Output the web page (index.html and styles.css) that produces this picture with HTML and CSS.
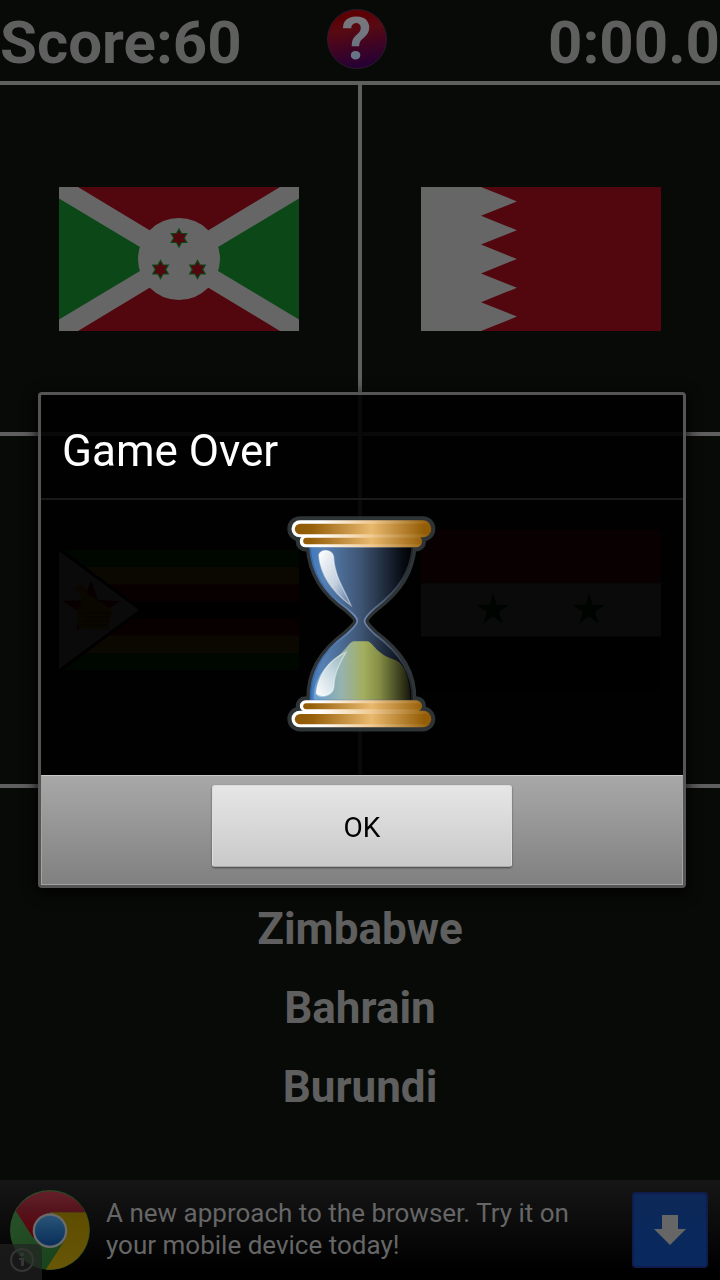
FILE: index.html
```html
<!DOCTYPE html>
<html lang="en">
<head>
<meta charset="utf-8">
<meta name="viewport" content="width=device-width, initial-scale=1">
<title>Flag Game</title>
<link rel="stylesheet" href="styles.css">
</head>
<body>
<div class="game">
  <header class="bar">
    <span class="score">Score:60</span>
    <button class="help" type="button" aria-label="Help"><span class="help-mark">?</span></button>
    <span class="timer">0:00.0</span>
  </header>

  <main class="board">
    <div class="cell">
      <svg class="flag" viewBox="0 0 240 144" role="img" aria-label="Flag of Burundi">
        <defs><path id="star6" d="M0-9 2.6-4.5H7.8L5.2 0 7.8 4.5H2.6L0 9-2.6 4.5H-7.8L-5.2 0-7.8-4.5H-2.6Z"/></defs>
        <path fill="#666" d="M0 0H240V144H0Z"/>
        <path fill="#52070e" d="M19 0H221L120 61ZM19 144H221L120 83Z"/>
        <path fill="#0c4717" d="M0 11.500 101 72 0 132.500ZM240 11.500 139 72 240 132.500Z"/>
        <circle cx="120" cy="72" r="41" fill="#666"/>
        <g fill="#52070e" stroke="#0c4717" stroke-width="1.200">
          <use href="#star6" x="120" y="51"/><use href="#star6" x="101.500" y="82.500"/><use href="#star6" x="138.500" y="82.500"/>
        </g>
      </svg>
    </div>
    <div class="cell">
      <svg class="flag" viewBox="0 0 240 144" role="img" aria-label="Flag of Bahrain">
        <path fill="#52070e" d="M0 0H240V144H0Z"/>
        <path fill="#666" d="M0 0H60L96 14.400 60 28.800 96 43.200 60 57.600 96 72 60 86.400 96 100.800 60 115.200 96 129.600 60 144H0Z"/>
      </svg>
    </div>
    <div class="cell">
      <svg class="flag" viewBox="0 0 240 120" role="img" aria-label="Flag of Zimbabwe">
        <path fill="#003c00" d="M0 0H240V120H0Z"/>
        <path fill="#665200" d="M0 17H240V103H0Z"/>
        <path fill="#560305" d="M0 34.300H240V85.700H0Z"/>
        <path fill="#000" d="M0 51.400H240V68.600H0ZM0 0H4L84 60 4 120H0Z"/>
        <path fill="#666" d="M0 1 80 60 0 119Z"/>
        <path fill="#560305" d="M32 30 39 50 61 51 44 63 50 80 32 72 17 80 21 62 3 51 25 50Z"/>
        <path fill="#5b4600" d="M15 40Q18 33 25 36L29 45Q43 51 53 61L49 79H20L18 61Q24 54 21 43Z"/>
        <path stroke="#2f2500" fill="none" d="M24 63H54M24 67H50M23 71H50M23 75H48"/>
      </svg>
    </div>
    <div class="cell">
      <svg class="flag" viewBox="0 0 240 160" role="img" aria-label="Flag of Syria">
        <defs><path id="star5" d="M0-17 3.800-5.300H16.200L6.200 2 10 13.700 0 6.500-10 13.700-6.200 2-16.200-5.300H-3.800Z"/></defs>
        <path fill="#52070e" d="M0 0H240V53.300H0Z"/>
        <path fill="#666" d="M0 53.300H240V106.700H0Z"/>
        <path fill="#000" d="M0 106.700H240V160H0Z"/>
        <g fill="#00310c"><use href="#star5" x="72" y="80"/><use href="#star5" x="168" y="80"/></g>
      </svg>
    </div>
  </main>

  <ul class="names">
    <li><button class="name" type="button">Zimbabwe</button></li>
    <li><button class="name" type="button">Bahrain</button></li>
    <li><button class="name" type="button">Burundi</button></li>
  </ul>

  <footer class="ad">
    <svg class="ad-logo" viewBox="30 60 240 240" aria-hidden="true">
      <defs>
        <linearGradient id="cr" x1="0" y1="0" x2="0" y2="1"><stop offset="0" stop-color="#642029"/><stop offset=".4" stop-color="#55141d"/><stop offset="1" stop-color="#5c0008"/></linearGradient>
        <linearGradient id="cb" x1="0" y1="0" x2="0" y2="1"><stop offset="0" stop-color="#295477"/><stop offset="1" stop-color="#082e59"/></linearGradient>
        <linearGradient id="cg" x1="0" y1="0" x2="1" y2="1"><stop offset="0" stop-color="#2c542c"/><stop offset="1" stop-color="#123d16"/></linearGradient>
        <linearGradient id="cy" x1="0" y1="0" x2="0" y2="1"><stop offset="0" stop-color="#5e4c00"/><stop offset="1" stop-color="#685707"/></linearGradient>
      </defs>
      <circle cx="150" cy="180" r="120" fill="url(#cg)"/>
      <path fill="url(#cy)" d="M256 127A120 120 0 0 1 137 299L196 208 150 127Z"/>
      <path fill="url(#cr)" d="M47 122A120 120 0 0 1 256 127H150L100 204Z"/>
      <circle cx="150" cy="182" r="52" fill="#6b6b6b"/>
      <circle cx="150" cy="182" r="45" fill="url(#cb)"/>
    </svg>
    <a class="ad-text" href="#">A new approach to the browser. Try it on your mobile device today!</a>
    <button class="ad-get" type="button" aria-label="Download">
      <svg class="ad-arrow" viewBox="0 0 32 32" aria-hidden="true"><path fill="#666" d="M8 1H24V15H32L16 31 0 15H8Z"/></svg>
    </button>
    <span class="ad-info">
      <svg class="ad-info-icon" viewBox="0 0 24 24" aria-hidden="true"><circle cx="12" cy="12" r="11" fill="none" stroke="#343534" stroke-width="2"/><path fill="#343534" d="M10 5H14V8H10ZM9 10H14V18H11V12H9Z"/></svg>
    </span>
  </footer>
</div>

<div class="overlay">
  <section class="dialog" role="dialog" aria-modal="true" aria-labelledby="dialog-title">
    <h1 class="dialog-title" id="dialog-title">Game Over</h1>
    <div class="dialog-body">
      <svg class="hourglass" viewBox="20 32 446 648" role="img" aria-label="Hourglass">
        <defs>
          <linearGradient id="rim" gradientUnits="userSpaceOnUse" x1="32" y1="0" x2="452" y2="0"><stop offset="0" stop-color="#fff"/><stop offset=".2" stop-color="#fff"/><stop offset=".58" stop-color="#efc88f"/><stop offset="1" stop-color="#925b03"/></linearGradient>
          <linearGradient id="wood" gradientUnits="userSpaceOnUse" x1="43" y1="0" x2="452" y2="0"><stop offset="0" stop-color="#8f5902"/><stop offset=".12" stop-color="#965f0a"/><stop offset=".56" stop-color="#e9b96e"/><stop offset=".95" stop-color="#935c06"/></linearGradient>
          <linearGradient id="glass" gradientUnits="userSpaceOnUse" x1="90" y1="0" x2="396" y2="0"><stop offset="0" stop-color="#4279bd"/><stop offset=".12" stop-color="#5681b3"/><stop offset=".5" stop-color="#3e5472"/><stop offset=".9" stop-color="#080c14"/><stop offset="1" stop-color="#000"/></linearGradient>
          <linearGradient id="edge" gradientUnits="userSpaceOnUse" x1="90" y1="0" x2="396" y2="0"><stop offset="0" stop-color="#3465a4"/><stop offset=".5" stop-color="#748db8"/><stop offset="1" stop-color="#202328"/></linearGradient>
          <linearGradient id="sand" gradientUnits="userSpaceOnUse" x1="95" y1="0" x2="390" y2="0"><stop offset="0" stop-color="#699fd4"/><stop offset=".3" stop-color="#96b3ae"/><stop offset=".52" stop-color="#a3ae5f"/><stop offset=".68" stop-color="#868f45"/><stop offset="1" stop-color="#16170a"/></linearGradient>
          <linearGradient id="shine" x1="0" y1="0" x2="1" y2="1"><stop offset="0" stop-color="#fff"/><stop offset=".55" stop-color="#c4d1df"/><stop offset="1" stop-color="#bed0e6" stop-opacity=".1"/></linearGradient>
          <linearGradient id="shine2" x1="0" y1="1" x2="1" y2="0"><stop offset="0" stop-color="#fff"/><stop offset=".55" stop-color="#c4d7df"/><stop offset="1" stop-color="#bed0d6" stop-opacity=".1"/></linearGradient>
          <path id="bulb" d="M88 124C94 205 130 260 199 309C241 345 241 349 199 386C120 444 88 505 90 586H395C398 505 360 444 282 386C242 349 242 345 282 309C360 250 390 195 396 124Z"/>
          <g id="caps"><rect x="33" y="45" width="419" height="51" rx="25"/><rect x="58" y="90" width="366" height="36" rx="17"/><rect x="58" y="585" width="366" height="34" rx="17"/><rect x="33" y="616" width="419" height="50" rx="25"/></g>
        </defs>
        <g fill="#2e3436" stroke="#2e3436" stroke-width="25" stroke-linejoin="round"><use href="#bulb"/><use href="#caps"/></g>
        <use href="#bulb" fill="url(#glass)"/>
        <path fill="url(#sand)" d="M100 586C96 535 118 497 161 462C194 438 205 411 219 408H260C279 410 285 447 342 463C367 470 389 510 390 586Z"/>
        <use href="#bulb" fill="none" stroke="url(#edge)" stroke-width="5"/>
        <path fill="url(#shine)" stroke="#fff" stroke-opacity=".45" stroke-width="4" d="M115 150C117 131 154 130 159 153C161 207 184 239 211 300C168 268 120 216 115 150Z"/>
        <path fill="url(#shine2)" stroke="#fff" stroke-opacity=".45" stroke-width="4" d="M107 564C111 519 139 465 196 441C178 470 160 507 160 544C158 571 119 581 107 564Z"/>
        <use href="#caps" fill="url(#rim)"/>
        <g fill="url(#wood)"><rect x="43" y="55" width="409" height="32" rx="16"/><rect x="68" y="97" width="356" height="20" rx="10"/><rect x="68" y="594" width="356" height="18" rx="9"/><rect x="43" y="626" width="409" height="31" rx="16"/></g>
      </svg>
    </div>
    <div class="dialog-actions">
      <button class="ok" type="button">OK</button>
    </div>
  </section>
</div>
</body>
</html>
```
FILE: styles.css
```css
* {
  box-sizing: border-box;
}

body {
  margin: 0;
  background: #080a07;
  color: #5f5f5f;
  font-family: Roboto, "Liberation Sans", sans-serif;
}

button {
  font-family: inherit;
  color: inherit;
  border: 0;
  padding: 0;
  background: none;
}

.game {
  display: flex;
  flex-direction: column;
  min-height: 100vh;
}

.bar {
  display: grid;
  grid-template-columns: 1fr auto 1fr;
  align-items: center;
  height: 81px;
  font-size: 60px;
  font-weight: 700;
  line-height: 72px;
}

.score,
.timer {
  padding-top: 4px;
}

.timer {
  text-align: right;
}

.help {
  width: 60px;
  height: 60px;
  margin: 0 7px 4px 0;
  border: 1px solid #2b1a2c;
  border-radius: 50%;
  background: linear-gradient(170deg, #5c0004 15%, #570a12 35%, #46051f 55%, #260034 90%);
  line-height: 58px;
}

.help-mark {
  display: block;
  background: linear-gradient(#77777c 20%, #667586 80%);
  background-clip: text;
  color: transparent;
  font-size: 60px;
  font-weight: 700;
}

.board {
  display: grid;
  grid-template-columns: 1fr 1fr;
  grid-template-rows: 347px 348px;
  gap: 4px;
  padding: 4px 0;
  background: #5f5f5f;
}

.cell {
  display: flex;
  align-items: center;
  justify-content: center;
  background: #080a07;
}

.flag {
  width: 240px;
}

.names {
  flex: 1;
  margin: 0;
  padding: 102px 0 52px;
  list-style: none;
  text-align: center;
}

.name {
  font-size: 44px;
  font-weight: 700;
  line-height: 79px;
}

.names li {
  height: 79px;
}

.ad {
  position: relative;
  display: flex;
  align-items: center;
  gap: 16px;
  height: 100px;
  padding: 0 12px 0 10px;
  background: linear-gradient(#161616, #000 90%);
}

.ad-logo {
  flex: none;
  width: 80px;
}

.ad-text {
  flex: 1;
  padding: 0 40px 2px 0;
  color: #666;
  font-size: 26px;
  line-height: 32px;
  text-decoration: none;
}

.ad-get {
  display: flex;
  align-items: center;
  justify-content: center;
  width: 76px;
  height: 76px;
  border: 2px solid #101d4c;
  border-radius: 4px;
  background: linear-gradient(#0d2858, #08295f);
}

.ad-arrow {
  width: 32px;
}

.ad-info {
  position: absolute;
  left: 0;
  bottom: 0;
  display: flex;
  padding: 4px 8px 8px 10px;
  border-top-right-radius: 6px;
  background: rgba(34, 34, 34, 0.7);
}

.ad-info-icon {
  width: 24px;
}

.overlay {
  position: fixed;
  inset: 0;
  display: flex;
  align-items: center;
  padding: 0 34px 0 38px;
}

.dialog {
  flex: 1;
  border: 3px solid #555;
  border-radius: 4px;
  background: rgba(0, 0, 0, 0.9);
  box-shadow: 0 4px 16px #000;
}

.dialog-title {
  margin: 0;
  padding: 24px 21px 14px;
  border-bottom: 2px solid #191919;
  color: #fff;
  font-size: 44px;
  font-weight: 400;
  line-height: 65px;
}

.dialog-body {
  display: flex;
  justify-content: center;
  padding: 16px 2px 43px 0;
}

.hourglass {
  width: 149px;
  height: 216px;
}

.dialog-actions {
  display: flex;
  justify-content: center;
  padding: 9px 0 17px;
  border: 1px solid #a3a3a3;
  border-top-color: #c8c8c8;
  background: linear-gradient(#a8a8a8, #808080);
}

.ok {
  width: 300px;
  height: 82px;
  padding-top: 2px;
  border: 1px solid #ddd;
  border-bottom-color: #aaa;
  border-radius: 3px;
  background: linear-gradient(#e6e6e6, #c9c9c9);
  box-shadow: 0 1px 2px #444;
  color: #000;
  font-size: 28px;
}
```
